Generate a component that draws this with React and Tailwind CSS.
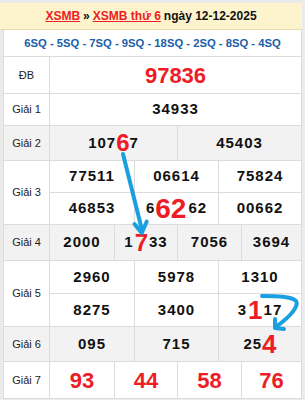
import React from "react";

const F = { fontFamily: '"Liberation Sans", Arial, Helvetica, sans-serif' };

function Label({ children }) {
  return (
    <div className="w-[46px] shrink-0 border-r border-[#dcdcdc] flex items-center justify-center text-[11px] text-[#222]">
      {children}
    </div>
  );
}

function Num({ children, className = "" }) {
  return (
    <div className={"flex items-center justify-center text-[15px] font-bold tracking-[1px] text-[#111] " + className}>
      {children}
    </div>
  );
}

const R = ({ children, size }) => (
  <span className={"text-[#ee1c24] leading-none tracking-normal " + size}>{children}</span>
);

export default function App() {
  return (
    <div style={F} className="relative w-[305px] h-[400px] bg-[#ebebeb] pt-[3px] overflow-hidden">
      <div className="w-[302px] h-[27px] bg-[#fdf3cd] border-b border-[#e6dcb4] flex items-center justify-center text-[12px] font-bold text-[#111]">
        <span className="text-[#ee1c24] underline">XSMB</span>
        <span className="mx-[3px]">»</span>
        <span className="text-[#ee1c24] underline">XSMB thứ 6</span>
        <span className="ml-[3px]">ngày 12-12-2025</span>
      </div>
      <div className="ml-[3px] w-[299px] border-x border-[#dcdcdc] bg-white">
        <div className="h-[27px] border-b border-[#dcdcdc] flex items-center justify-center text-[11.25px] font-bold text-[#1a5ea8] whitespace-nowrap">
          6SQ - 5SQ - 7SQ - 9SQ - 18SQ - 2SQ - 8SQ - 4SQ
        </div>
        {/* DB */}
        <div className="h-[37px] border-b border-[#dcdcdc] flex">
          <Label>ĐB</Label>
          <div className="flex-1 flex items-center justify-center text-[22px] font-bold text-[#ee1c24]">97836</div>
        </div>
        {/* G1 */}
        <div className="h-[32px] border-b border-[#dcdcdc] flex">
          <Label>Giải 1</Label>
          <Num className="flex-1">34933</Num>
        </div>
        {/* G2 */}
        <div className="h-[35px] border-b border-[#dcdcdc] flex bg-[#f2f2f2]">
          <Label>Giải 2</Label>
          <div className="flex-1 grid grid-cols-[128px_1fr]">
            <Num className="border-r border-[#dcdcdc]">107<R size="text-[24px]">6</R>7</Num>
            <Num>45403</Num>
          </div>
        </div>
        {/* G3 */}
        <div className="h-[64px] border-b border-[#dcdcdc] flex">
          <Label>Giải 3</Label>
          <div className="flex-1 flex flex-col">
            <div className="h-[32px] border-b border-[#dcdcdc] grid grid-cols-[85px_84px_1fr]">
              <Num className="border-r border-[#dcdcdc]">77511</Num>
              <Num className="border-r border-[#dcdcdc]">06614</Num>
              <Num>75824</Num>
            </div>
            <div className="flex-1 grid grid-cols-[85px_84px_1fr]">
              <Num className="border-r border-[#dcdcdc]">46853</Num>
              <Num className="border-r border-[#dcdcdc]">6<R size="text-[28px] tracking-[-2px] mr-[2px]">62</R>62</Num>
              <Num>00662</Num>
            </div>
          </div>
        </div>
        {/* G4 */}
        <div className="h-[36px] border-b border-[#dcdcdc] flex bg-[#f2f2f2]">
          <Label>Giải 4</Label>
          <div className="flex-1 grid grid-cols-[65px_63px_64px_1fr]">
            <Num className="border-r border-[#dcdcdc]">2000</Num>
            <Num className="border-r border-[#dcdcdc]">1<R size="text-[24px] mx-[1px]">7</R>33</Num>
            <Num className="border-r border-[#dcdcdc]">7056</Num>
            <Num>3694</Num>
          </div>
        </div>
        {/* G5 */}
        <div className="h-[66px] border-b border-[#dcdcdc] flex">
          <Label>Giải 5</Label>
          <div className="flex-1 flex flex-col">
            <div className="h-[33px] border-b border-[#dcdcdc] grid grid-cols-[85px_84px_1fr]">
              <Num className="border-r border-[#dcdcdc]">2960</Num>
              <Num className="border-r border-[#dcdcdc]">5978</Num>
              <Num>1310</Num>
            </div>
            <div className="flex-1 grid grid-cols-[85px_84px_1fr]">
              <Num className="border-r border-[#dcdcdc]">8275</Num>
              <Num className="border-r border-[#dcdcdc]">3400</Num>
              <Num>3<R size="text-[26px] mx-[1px]">1</R>17</Num>
            </div>
          </div>
        </div>
        {/* G6 */}
        <div className="h-[35px] border-b border-[#dcdcdc] flex bg-[#f2f2f2]">
          <Label>Giải 6</Label>
          <div className="flex-1 grid grid-cols-[85px_84px_1fr]">
            <Num className="border-r border-[#dcdcdc]">095</Num>
            <Num className="border-r border-[#dcdcdc]">715</Num>
            <Num>25<R size="text-[26px]">4</R></Num>
          </div>
        </div>
        {/* G7 */}
        <div className="h-[37px] border-b border-[#dcdcdc] flex">
          <Label>Giải 7</Label>
          <div className="flex-1 grid grid-cols-[65px_63px_64px_1fr] text-[22px] font-bold text-[#ee1c24]">
            <div className="border-r border-[#dcdcdc] flex items-center justify-center">93</div>
            <div className="border-r border-[#dcdcdc] flex items-center justify-center">44</div>
            <div className="border-r border-[#dcdcdc] flex items-center justify-center">58</div>
            <div className="flex items-center justify-center">76</div>
          </div>
        </div>
      </div>
      <svg className="absolute left-0 top-0 pointer-events-none" width="305" height="400" viewBox="0 0 305 400">
        <g fill="none" stroke="#1a9fe0" strokeWidth="4" strokeLinecap="round" strokeLinejoin="round">
          <path d="M123 154 L142 230" />
          <path d="M134.5 224 L141.7 233 L146.7 221.7" />
          <path d="M262 296 C276 296 292 296 296 301 C299 306 291 316 277 326" />
          <path d="M275 319 L275 328 L284 329" />
        </g>
      </svg>
    </div>
  );
}
